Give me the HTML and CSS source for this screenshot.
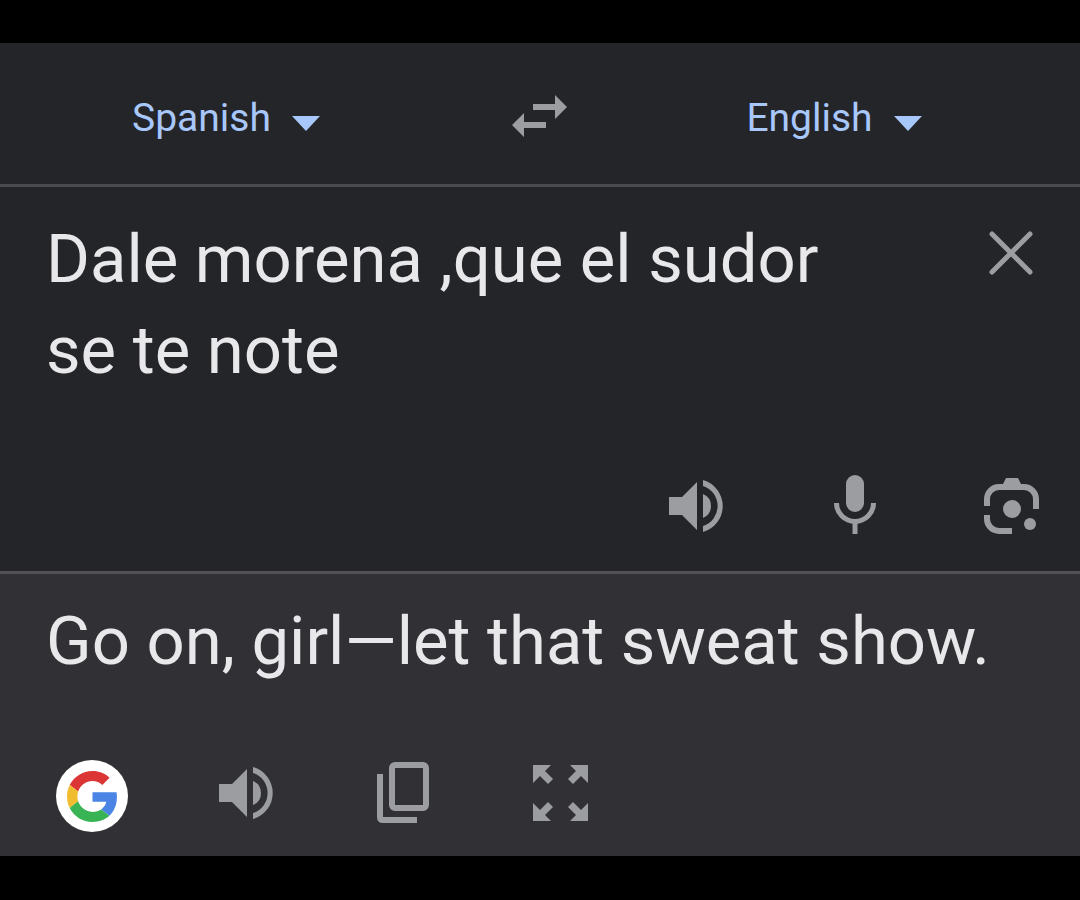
FILE: index.html
```html
<!DOCTYPE html>
<html lang="en">
<head>
<meta charset="utf-8">
<meta name="viewport" content="width=device-width, initial-scale=1">
<title>Translate</title>
<link rel="stylesheet" href="styles.css">
</head>
<body>
<main class="translator">
  <header class="languages">
    <div class="language language-from">
      <button class="language-button" type="button">Spanish
        <svg class="caret" viewBox="0 0 28 15" aria-hidden="true"><path d="M0 0H28L14 15Z"/></svg>
      </button>
    </div>
    <button class="swap" type="button" aria-label="Swap languages">
      <svg class="swap-icon" viewBox="0 0 56 42" aria-hidden="true"><path d="M21 9H43V0L55 12 43 24V15H21ZM34 27H12V18L0 30 12 42V33H34Z"/></svg>
    </button>
    <div class="language">
      <button class="language-button" type="button">English
        <svg class="caret" viewBox="0 0 28 15" aria-hidden="true"><path d="M0 0H28L14 15Z"/></svg>
      </button>
    </div>
  </header>

  <section class="source">
    <div class="source-entry">
      <textarea class="phrase source-text" rows="2" aria-label="Source text" spellcheck="false">Dale morena ,que el sudor se te note</textarea>
      <button class="icon-button clear" type="button" aria-label="Clear text">
        <svg class="icon" viewBox="0 0 72 72" aria-hidden="true"><path class="line line-thin" d="M16 16 54 54M54 16 16 54"/></svg>
      </button>
    </div>
    <div class="actions source-actions">
      <button class="icon-button" type="button" aria-label="Listen to source">
        <svg class="icon" viewBox="2 3 72 72" aria-hidden="true"><path d="M9 27V45H22L37 60V12L22 27ZM43 24A13 13 0 0 1 43 48ZM43 10A27 27 0 0 1 43 62V56A21 21 0 0 0 43 16Z"/></svg>
      </button>
      <button class="icon-button" type="button" aria-label="Speak">
        <svg class="icon" viewBox="0 3 72 72" aria-hidden="true"><rect x="27" y="5" width="18" height="37" rx="9"/><path class="line line-mic" d="M17.500 33A18.500 18.500 0 0 0 54.500 33M36 51V64"/></svg>
      </button>
      <button class="icon-button" type="button" aria-label="Use camera">
        <svg class="icon" viewBox="0 3 72 72" aria-hidden="true"><path class="line" d="M11 36V29A12 12 0 0 1 23 17H48A12 12 0 0 1 60 29V39M11 45V49A12 12 0 0 0 23 61H36"/><path d="M26 16 30 8H42L46 16Z"/><circle cx="36" cy="39" r="9"/><circle cx="54" cy="54" r="6"/></svg>
      </button>
    </div>
  </section>

  <section class="result">
    <p class="phrase result-text">Go on, girl—let that sweat show.</p>
    <div class="actions result-actions">
      <button class="icon-button google" type="button" aria-label="Search with Google">
        <svg class="google-icon" viewBox="0 0 48 48" aria-hidden="true">
          <path fill="#dc3535" d="M24 9.500c3.540 0 6.710 1.220 9.210 3.600l6.850-6.850C35.900 2.380 30.470 0 24 0 14.620 0 6.510 5.380 2.560 13.220l7.980 6.190C12.430 13.720 17.740 9.500 24 9.500z"/>
          <path fill="#4a84e4" d="M46.980 24.550c0-1.570-.15-3.090-.38-4.550H24v9.020h12.940c-.58 2.960-2.260 5.480-4.780 7.180l7.730 6c4.510-4.180 7.090-10.360 7.090-17.650z"/>
          <path fill="#f0bd30" d="M10.530 28.590c-.48-1.450-.76-2.990-.76-4.590s.27-3.140.76-4.590l-7.980-6.190C.92 16.460 0 20.120 0 24c0 3.880.92 7.540 2.560 10.780l7.970-6.190z"/>
          <path fill="#38b454" d="M24 48c6.480 0 11.930-2.130 15.890-5.810l-7.730-6c-2.150 1.450-4.920 2.300-8.160 2.300-6.260 0-11.570-4.220-13.470-9.910l-7.980 6.190C6.510 42.620 14.620 48 24 48z"/>
        </svg>
      </button>
      <button class="icon-button" type="button" aria-label="Listen to translation">
        <svg class="icon" viewBox="2 3 72 72" aria-hidden="true"><path d="M9 27V45H22L37 60V12L22 27ZM43 24A13 13 0 0 1 43 48ZM43 10A27 27 0 0 1 43 62V56A21 21 0 0 0 43 16Z"/></svg>
      </button>
      <button class="icon-button" type="button" aria-label="Copy translation">
        <svg class="icon" viewBox="1 3 72 72" aria-hidden="true"><rect class="line" x="25" y="8" width="34" height="43" rx="3"/><path class="line" d="M13 17V60Q13 63 16 63H50"/></svg>
      </button>
      <button class="icon-button" type="button" aria-label="Full screen">
        <svg class="icon" viewBox="0 3 72 72" aria-hidden="true"><path d="M9 8H27L21 14 29 22 24 27 16 19 9 26ZM64 8H46L52 14 44 22 49 27 57 19 64 26ZM9 64H27L21 58 29 50 24 45 16 53 9 46ZM64 64H46L52 58 44 50 49 45 57 53 64 46Z"/></svg>
      </button>
    </div>
  </section>
</main>
</body>
</html>
```
FILE: styles.css
```css
* {
  box-sizing: border-box;
}

body {
  margin: 0;
  padding: 43px 0 44px;
  background: #000;
  color: #e8e8eb;
  font-family: Roboto, "Liberation Sans", sans-serif;
}

button {
  padding: 0;
  border: 0;
  background: none;
  color: inherit;
  font: inherit;
  cursor: pointer;
}

svg {
  display: block;
  fill: currentColor;
}

.translator {
  background: #242529;
}

.languages {
  display: grid;
  grid-template-columns: 1fr 96px 1fr;
  align-items: center;
  height: 144px;
  padding-top: 4px;
  border-bottom: 3px solid #4a4a4e;
}

.language {
  display: flex;
  justify-content: center;
  padding-top: 4px;
}

.language-from {
  padding-right: 40px;
}

.language-button {
  display: flex;
  align-items: center;
  gap: 21px;
  color: #a8c7fa;
  font-size: 39px;
  line-height: 48px;
}

.caret {
  width: 28px;
  height: 15px;
  margin-top: 12px;
}

.swap {
  display: flex;
  justify-content: center;
  color: #9c9da1;
}

.swap-icon {
  width: 56px;
  height: 42px;
}

.source {
  padding: 27px 32px 26px 46px;
  border-bottom: 3px solid #515156;
}

.source-entry {
  display: flex;
  align-items: flex-start;
  gap: 60px;
  margin-bottom: 77px;
}

.phrase {
  margin: 0;
  font-size: 67px;
  line-height: 91px;
}

.source-text {
  flex: 1;
  min-width: 0;
  padding: 0 40px 0 0;
  border: 0;
  outline: 0;
  overflow: hidden;
  resize: none;
  background: none;
  color: inherit;
  font-family: inherit;
}

.icon-button {
  flex: none;
  width: 72px;
  height: 72px;
  color: #9c9da1;
}

.clear {
  margin-top: 4px;
}

.icon {
  width: 72px;
  height: 72px;
}

.line {
  fill: none;
  stroke: currentColor;
  stroke-width: 6;
}

.line-thin,
.line-mic {
  stroke-width: 5;
}

.line-thin {
  stroke-linecap: round;
}

.actions {
  display: flex;
  align-items: center;
  gap: 85px;
}

.source-actions {
  justify-content: flex-end;
}

.result {
  padding: 22px 40px 24px 46px;
  background: #313135;
}

.result-text {
  margin-bottom: 73px;
}

.result-actions {
  gap: 84px;
  padding-left: 10px;
}

.google {
  display: grid;
  place-items: center;
  border-radius: 50%;
  background: #fff;
}

.google-icon {
  width: 51px;
  height: 51px;
}
```
